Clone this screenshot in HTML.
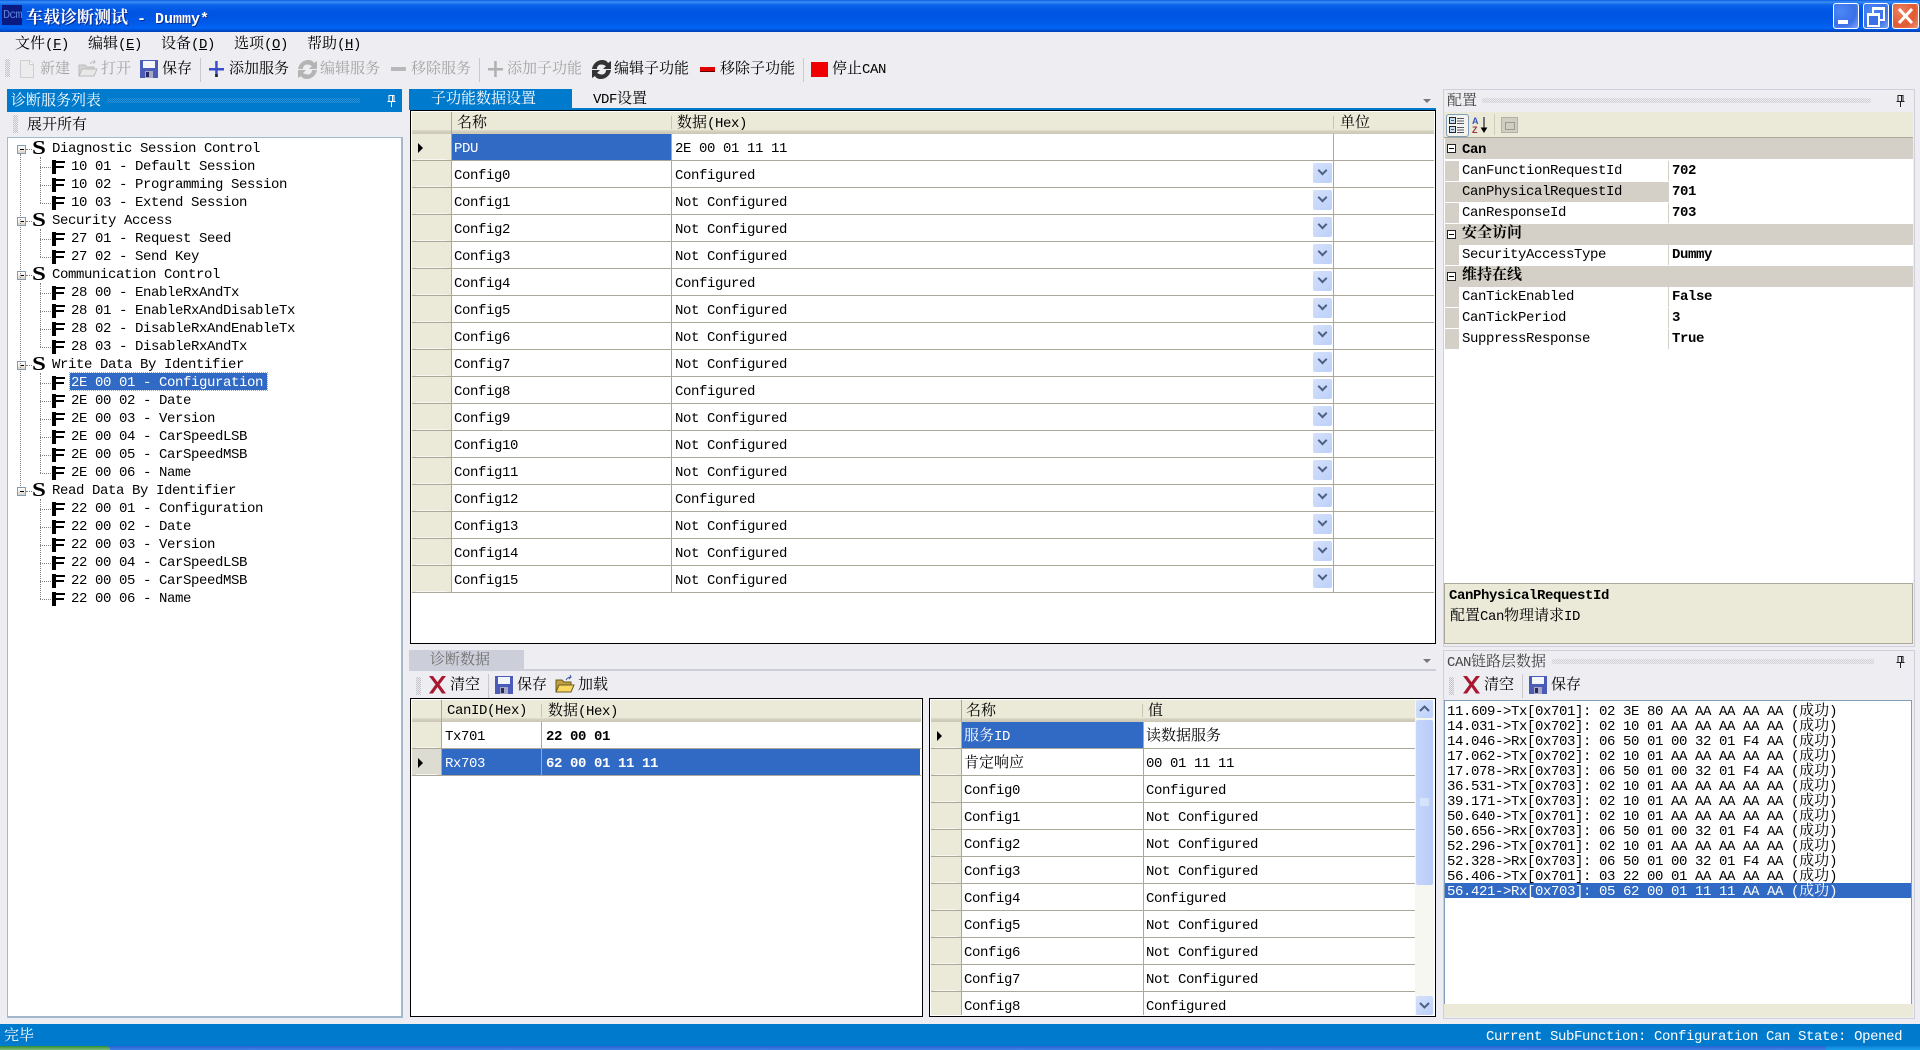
<!DOCTYPE html>
<html lang="zh"><head><meta charset="utf-8"><title>车载诊断测试</title>
<style>
html,body{margin:0;padding:0;width:1920px;height:1050px;overflow:hidden;background:#eeeef2}
body{position:relative;color:#000;font:14px/18px "Liberation Mono","Noto Serif CJK SC",monospace;letter-spacing:-.4px}
i{font:normal 15px/1 "Liberation Sans","Noto Serif CJK SC","WenQuanYi Zen Hei",serif;letter-spacing:0}
.x{position:absolute;white-space:pre;height:22px;line-height:22px}
.d{position:absolute}
.w{color:#fff}.gy{color:#a3a3a3}
svg{position:absolute;overflow:visible}
.grip{position:absolute;width:5px;background:conic-gradient(#c2c2c8 25%,transparent 0 50%,#c2c2c8 0 75%,transparent 0) 0 0/2px 2px}
.dots{position:absolute;height:5px;background:conic-gradient(#cfcfd5 25%,transparent 0 50%,#cfcfd5 0 75%,transparent 0) 0 0/2px 2px}
.sep{position:absolute;width:1px;background:#c9c9cf}
.tri{position:absolute;width:0;height:0;border-left:4px solid transparent;border-right:4px solid transparent;border-top:4px solid #77777c}
/* tree */
#tree .r{position:relative;height:18px;white-space:pre;line-height:18px}
#tree .s{padding-left:52px}
#tree .f{padding-left:71px}
#tree .f:before{content:"";position:absolute;left:52px;top:2px;width:13px;height:14px;background:linear-gradient(#000,#000) 0 0/4px 14px no-repeat,linear-gradient(#000,#000) 0 1px/13px 2px no-repeat,linear-gradient(#000,#000) 0 6px/12px 2px no-repeat}
#tree .f:after{content:"";position:absolute;left:40px;top:9px;width:11px;border-top:1px dotted #808080}
#tree .s b{position:absolute;left:32px;top:-2px;width:14px;font:bold 20px/20px "Liberation Serif",serif;letter-spacing:0;transform:scaleX(1.25);transform-origin:0 50%}
#tree .s:before{content:"";position:absolute;left:17px;top:5px;width:7px;height:7px;border:1px solid #7f9db9;background:linear-gradient(#000,#000) 2px 3px/4px 1px no-repeat,linear-gradient(#fff,#d8d4c8)}
#tree .s:after{content:"";position:absolute;left:26px;top:9px;width:6px;border-top:1px dotted #808080}
/* grids */
.hd{position:absolute;background:linear-gradient(#ebe9d8 0,#ebe9d8 80%,#d6d2c2 86%,#cbc7b6 100%)}
.grid .r{display:flex;height:26px;border-bottom:1px solid #aca899;position:relative;line-height:26px}
.grid a{display:block;flex:none;background:#ebe9d8;border-right:1px solid #aca899;box-sizing:border-box;position:relative;height:26px}
.grid a:after{content:"";position:absolute;left:4px;right:4px;bottom:0;border-bottom:1px solid #f8f7ef}
.grid p{margin:0;box-sizing:border-box;flex:none;height:26px;border-right:1px solid #aca899;padding:2px 0 0 2px;white-space:pre;background:#fff;overflow:hidden}
.sel{background:#316ac5!important;color:#fff}
.ar:before{content:"";position:absolute;left:6px;top:9px;border-left:5px solid #000;border-top:5px solid transparent;border-bottom:5px solid transparent}
.g1 a{width:40px}.g1 p:nth-of-type(1){width:220px}.g1 p:nth-of-type(2){width:662px;padding-left:3px}.g1 p:nth-of-type(3){width:100px;border-right:0}
.g2 a{width:30px}.g2 p:nth-of-type(1){width:100px;padding-left:3px}.g2 p:nth-of-type(2){width:378px;padding-left:4px;border-right:0;font-weight:bold}
.g3 a{width:31px}.g3 p:nth-of-type(1){width:182px}.g3 p:nth-of-type(2){width:271px;border-right:0}
.dd{position:absolute;left:901px;top:2px;width:19px;height:20px;background:linear-gradient(135deg,#d5e1fb,#bcd0fa);border-radius:2px}
.dd:after{content:"";position:absolute;left:6px;top:4px;width:5px;height:5px;border-right:2px solid #4d6185;border-bottom:2px solid #4d6185;transform:rotate(45deg)}
/* prop grid */
.cat{position:absolute;left:1445px;width:468px;height:21px;background:#d4d0c8;font-weight:bold;line-height:21px}
.cat:before{content:"";position:absolute;left:2px;top:6px;width:7px;height:7px;border:1px solid #222;background:linear-gradient(#000,#000) 1px 3px/5px 1px no-repeat,#fff}
.cat span{position:absolute;left:17px;white-space:pre}
.pr{position:absolute;left:1445px;width:468px;height:20px;background:#d4d0c8;line-height:20px;white-space:pre}
.pr p{position:absolute;margin:0;top:0;height:20px;background:#fff;overflow:hidden;padding-left:3px;box-sizing:border-box}
.pr p:nth-child(1){left:14px;width:209px}
.pr p:nth-child(2){left:224px;width:244px;font-weight:bold;padding-left:3px}
/* log */
#log div{height:15px;line-height:15px;white-space:pre;padding-left:2px}
</style></head><body>

<!-- title bar -->
<div class="d" style="left:0;top:0;width:1920px;height:32px;background:linear-gradient(#0a5de0 0,#3a8df5 2px,#0a63ea 5px,#0055e2 12px,#0058e6 22px,#0064f4 28px,#0048c8 31px,#0040b0 32px)"></div>
<div class="d" style="left:2px;top:5px;width:20px;height:20px;background:#0a1a80"></div>
<div class="x" style="left:3px;top:4px;font-size:12px;color:#5a7fd8;letter-spacing:-1px">Dcm</div>
<div class="x w" style="left:26px;top:9px;height:19px;font:bold 15px/19px 'Liberation Mono',monospace;letter-spacing:0;text-shadow:1px 1px 0 #0a2a90"><i style="font-size:17px;font-weight:bold">车载诊断测试</i> - Dummy*</div>
<!-- window buttons -->
<div class="d" style="left:1833px;top:3px;width:24px;height:24px;border:1px solid #fff;border-radius:3px;background:radial-gradient(circle at 30% 30%,#4b88f5,#3a6fe8 60%,#7fa8f5)"><div class="d" style="left:4px;top:16px;width:10px;height:4px;background:#fff"></div></div>
<div class="d" style="left:1863px;top:3px;width:24px;height:24px;border:1px solid #fff;border-radius:3px;background:radial-gradient(circle at 30% 30%,#4b88f5,#3a6fe8 60%,#7fa8f5)"><div class="d" style="left:8px;top:3px;width:9px;height:9px;border:2px solid #fff;border-top-width:3px"></div><div class="d" style="left:3px;top:9px;width:9px;height:9px;border:2px solid #fff;border-top-width:3px;background:#3a6fe8"></div></div>
<div class="d" style="left:1892px;top:3px;width:25px;height:24px;border:1px solid #fff;border-radius:3px;background:radial-gradient(circle at 30% 30%,#ee8060,#e05a32 60%,#ee9880)"><svg width="25" height="24" style="left:0;top:0"><path d="M6 5L19 19M19 5L6 19" stroke="#fff" stroke-width="3"/></svg></div>

<!-- menu -->
<div class="x" style="left:15px;top:34px"><i>文件</i>(<u>F</u>)</div>
<div class="x" style="left:88px;top:34px"><i>编辑</i>(<u>E</u>)</div>
<div class="x" style="left:161px;top:34px"><i>设备</i>(<u>D</u>)</div>
<div class="x" style="left:234px;top:34px"><i>选项</i>(<u>O</u>)</div>
<div class="x" style="left:307px;top:34px"><i>帮助</i>(<u>H</u>)</div>

<!-- toolbar -->
<div class="grip" style="left:5px;top:59px;height:18px"></div>
<svg style="left:19px;top:60px" width="16" height="18"><path d="M1.5 .5h9l4 4v13h-13z" fill="#ececec" stroke="#cfcfcf"/><path d="M10.5 .5v4h4" fill="#f8f8f8" stroke="#cfcfcf"/></svg>
<div class="x gy" style="left:40px;top:59px"><i>新建</i></div>
<svg style="left:78px;top:60px" width="20" height="18"><path d="M1 5h6l2 2h7v9H1z" fill="#d4d4d4" stroke="#bcbcbc"/><path d="M1 16l3-7h15l-3 7z" fill="#e8e8e8" stroke="#bcbcbc"/><path d="M12 4q2-3 5-2l-1-2M17 2l-2 2" fill="none" stroke="#c0c0c0"/></svg>
<div class="x gy" style="left:101px;top:59px"><i>打开</i></div>
<svg style="left:140px;top:60px" width="18" height="18"><rect width="18" height="18" fill="#4a5bb8"/><rect x="3" y="1" width="12" height="7" fill="#f4f4fb"/><rect x="5" y="11" width="8" height="7" fill="#a8a8c4"/><rect x="6" y="12" width="3" height="5" fill="#2a2a60"/></svg>
<div class="x" style="left:162px;top:59px"><i>保存</i></div>
<div class="sep" style="left:200px;top:58px;height:24px"></div>
<svg style="left:209px;top:61px" width="16" height="17"><rect y="7" width="15" height="2.5" fill="#3a4fc8"/><rect x="6.2" width="2.5" height="16" fill="#3a4fc8"/><rect x="6.2" y="13" width="2.5" height="3" fill="#222"/></svg>
<div class="x" style="left:229px;top:59px"><i>添加服务</i></div>
<svg style="left:298px;top:60px" width="19" height="19"><path d="M0 9C1 3 6 0 10 0c3 0 5 1 6 3l3-2v8h-8l3-3c-2-1-3-1.500-5-1.500C7 4.500 5 6 5 9z" fill="#b4b4b4"/><path d="M19 10c-1 6-6 9-10 9-3 0-5-1-6-3l-3 2v-8h8l-3 3c2 1 3 1.500 5 1.500 2 0 4-1.500 4-4.500z" fill="#b4b4b4"/></svg>
<div class="x gy" style="left:320px;top:59px"><i>编辑服务</i></div>
<div class="d" style="left:391px;top:67px;width:15px;height:4px;background:#b8b8b8"></div>
<div class="x gy" style="left:411px;top:59px"><i>移除服务</i></div>
<div class="sep" style="left:479px;top:58px;height:24px"></div>
<svg style="left:488px;top:61px" width="16" height="17"><rect y="7" width="15" height="2.5" fill="#b0b0b0"/><rect x="6.2" width="2.5" height="16" fill="#b0b0b0"/></svg>
<div class="x gy" style="left:507px;top:59px"><i>添加子功能</i></div>
<svg style="left:592px;top:60px" width="19" height="19"><path d="M0 9C1 3 6 0 10 0c3 0 5 1 6 3l3-2v8h-8l3-3c-2-1-3-1.500-5-1.500C7 4.500 5 6 5 9z" fill="#333"/><path d="M19 10c-1 6-6 9-10 9-3 0-5-1-6-3l-3 2v-8h8l-3 3c2 1 3 1.500 5 1.500 2 0 4-1.500 4-4.500z" fill="#333"/></svg>
<div class="x" style="left:614px;top:59px"><i>编辑子功能</i></div>
<div class="d" style="left:700px;top:67px;width:15px;height:4px;background:#e00000;box-shadow:0 1px 0 #600"></div>
<div class="x" style="left:720px;top:59px"><i>移除子功能</i></div>
<div class="sep" style="left:803px;top:58px;height:24px"></div>
<div class="d" style="left:811px;top:62px;width:17px;height:15px;background:#f00000"></div>
<div class="x" style="left:832px;top:59px"><i>停止</i>CAN</div>

<!-- left panel -->
<div class="d" style="left:7px;top:89px;width:395px;height:23px;background:#007acc"></div>
<div class="x w" style="left:11px;top:91px"><i>诊断服务列表</i></div>
<div class="dots" style="left:107px;top:98px;width:253px;background:conic-gradient(#2a8fd6 25%,transparent 0 50%,#2a8fd6 0 75%,transparent 0) 0 0/2px 2px"></div>
<svg style="left:387px;top:95px" width="9" height="12"><path d="M2 .5h5v6H2zM.5 6.5h8M4.5 6.5V12M5.5 1v5" fill="none" stroke="#fff"/></svg>
<div class="grip" style="left:13px;top:115px;height:18px"></div>
<div class="x" style="left:27px;top:115px"><i>展开所有</i></div>
<div class="d" id="tree" style="left:7px;top:137px;width:393px;height:878px;background:#fff;border:1px solid #a3b8cc;border-right-width:2px;border-bottom-width:2px;box-sizing:content-box">
<div class="d" style="left:-8px;top:2px;width:395px">
<div class="r s"><b>S</b>Diagnostic Session Control</div>
<div class="r f">10 01 - Default Session</div>
<div class="r f">10 02 - Programming Session</div>
<div class="r f">10 03 - Extend Session</div>
<div class="r s"><b>S</b>Security Access</div>
<div class="r f">27 01 - Request Seed</div>
<div class="r f">27 02 - Send Key</div>
<div class="r s"><b>S</b>Communication Control</div>
<div class="r f">28 00 - EnableRxAndTx</div>
<div class="r f">28 01 - EnableRxAndDisableTx</div>
<div class="r f">28 02 - DisableRxAndEnableTx</div>
<div class="r f">28 03 - DisableRxAndTx</div>
<div class="r s"><b>S</b>Write Data By Identifier</div>
<div class="r f"><span style="position:absolute;left:70px;top:-1px;width:196px;height:17px;line-height:20px;padding-left:1px;background:#316ac5;color:#fff;outline:1px dotted #c8a040;outline-offset:0">2E 00 01 - Configuration</span></div>
<div class="r f">2E 00 02 - Date</div>
<div class="r f">2E 00 03 - Version</div>
<div class="r f">2E 00 04 - CarSpeedLSB</div>
<div class="r f">2E 00 05 - CarSpeedMSB</div>
<div class="r f">2E 00 06 - Name</div>
<div class="r s"><b>S</b>Read Data By Identifier</div>
<div class="r f">22 00 01 - Configuration</div>
<div class="r f">22 00 02 - Date</div>
<div class="r f">22 00 03 - Version</div>
<div class="r f">22 00 04 - CarSpeedLSB</div>
<div class="r f">22 00 05 - CarSpeedMSB</div>
<div class="r f">22 00 06 - Name</div>
</div>
<!-- dotted verticals -->
<div class="d" style="left:12px;top:16px;height:334px;border-left:1px dotted #808080"></div>
<div class="d" style="left:32px;top:19px;height:46px;border-left:1px dotted #808080"></div>
<div class="d" style="left:32px;top:91px;height:28px;border-left:1px dotted #808080"></div>
<div class="d" style="left:32px;top:145px;height:64px;border-left:1px dotted #808080"></div>
<div class="d" style="left:32px;top:235px;height:100px;border-left:1px dotted #808080"></div>
<div class="d" style="left:32px;top:361px;height:100px;border-left:1px dotted #808080"></div>
</div>

<!-- center tab -->
<div class="d" style="left:409px;top:89px;width:163px;height:19px;background:#007acc"></div>
<div class="x w" style="left:431px;top:89px"><i>子功能数据设置</i></div>
<div class="x" style="left:593px;top:89px">VDF<i>设置</i></div>
<div class="d" style="left:409px;top:108px;width:1027px;height:2px;background:#007acc"></div>
<div class="tri" style="left:1423px;top:99px"></div>

<!-- main grid -->
<div class="d" style="left:410px;top:110px;width:1024px;height:532px;border:1px solid #000;background:#fff"></div>
<div class="hd" style="left:412px;top:112px;width:1022px;height:22px"></div>
<div class="d" style="left:451px;top:112px;width:1px;height:22px;background:#aca899"></div>
<div class="d" style="left:671px;top:116px;width:1px;height:13px;background:#c8c4b4"></div>
<div class="d" style="left:1333px;top:116px;width:1px;height:13px;background:#c8c4b4"></div>
<div class="x" style="left:457px;top:113px"><i>名称</i></div>
<div class="x" style="left:677px;top:113px"><i>数据</i>(Hex)</div>
<div class="x" style="left:1340px;top:113px"><i>单位</i></div>
<div class="d grid g1" style="left:412px;top:134px;width:1022px">
<div class="r"><a class="ar"></a><p class="sel">PDU</p><p>2E 00 01 11 11</p><p></p></div>
<div class="r"><a></a><p>Config0</p><p>Configured</p><p></p><b class="dd"></b></div>
<div class="r"><a></a><p>Config1</p><p>Not Configured</p><p></p><b class="dd"></b></div>
<div class="r"><a></a><p>Config2</p><p>Not Configured</p><p></p><b class="dd"></b></div>
<div class="r"><a></a><p>Config3</p><p>Not Configured</p><p></p><b class="dd"></b></div>
<div class="r"><a></a><p>Config4</p><p>Configured</p><p></p><b class="dd"></b></div>
<div class="r"><a></a><p>Config5</p><p>Not Configured</p><p></p><b class="dd"></b></div>
<div class="r"><a></a><p>Config6</p><p>Not Configured</p><p></p><b class="dd"></b></div>
<div class="r"><a></a><p>Config7</p><p>Not Configured</p><p></p><b class="dd"></b></div>
<div class="r"><a></a><p>Config8</p><p>Configured</p><p></p><b class="dd"></b></div>
<div class="r"><a></a><p>Config9</p><p>Not Configured</p><p></p><b class="dd"></b></div>
<div class="r"><a></a><p>Config10</p><p>Not Configured</p><p></p><b class="dd"></b></div>
<div class="r"><a></a><p>Config11</p><p>Not Configured</p><p></p><b class="dd"></b></div>
<div class="r"><a></a><p>Config12</p><p>Configured</p><p></p><b class="dd"></b></div>
<div class="r"><a></a><p>Config13</p><p>Not Configured</p><p></p><b class="dd"></b></div>
<div class="r"><a></a><p>Config14</p><p>Not Configured</p><p></p><b class="dd"></b></div>
<div class="r"><a></a><p>Config15</p><p>Not Configured</p><p></p><b class="dd"></b></div>
</div>

<!-- diagnostic data panel -->
<div class="d" style="left:409px;top:650px;width:115px;height:19px;background:#ccced9"></div>
<div class="x" style="left:430px;top:650px;color:#707070"><i>诊断数据</i></div>
<div class="d" style="left:409px;top:669px;width:1027px;height:2px;background:#ccced9"></div>
<div class="tri" style="left:1423px;top:659px"></div>
<div class="grip" style="left:416px;top:677px;height:18px"></div>
<svg style="left:428px;top:675px" width="19" height="19"><path d="M1 1h4l4.500 6 4.500-6h4l-6.500 8.500 6.500 9h-4l-4.500-6.500-4.500 6.500h-4l6.500-9z" fill="#a81830"/></svg>
<div class="x" style="left:450px;top:675px"><i>清空</i></div>
<div class="sep" style="left:488px;top:674px;height:24px"></div>
<svg style="left:495px;top:676px" width="18" height="18"><rect width="18" height="18" fill="#4a5bb8"/><rect x="3" y="1" width="12" height="7" fill="#f4f4fb"/><rect x="5" y="11" width="8" height="7" fill="#a8a8c4"/><rect x="6" y="12" width="3" height="5" fill="#2a2a60"/></svg>
<div class="x" style="left:517px;top:675px"><i>保存</i></div>
<svg style="left:555px;top:675px" width="20" height="19"><path d="M1 5h6l2 2h7v10H1z" fill="#c0a040" stroke="#6a5a20"/><path d="M1 17l3-7h15l-3 7z" fill="#f8d860" stroke="#6a5a20"/><path d="M11 5q2-3 5-3l-1-2M16 2l-2 2" fill="none" stroke="#4060a0"/></svg>
<div class="x" style="left:578px;top:675px"><i>加载</i></div>

<!-- left data table -->
<div class="d" style="left:410px;top:698px;width:511px;height:317px;border:1px solid #000;background:#fff"></div>
<div class="hd" style="left:412px;top:700px;width:509px;height:22px"></div>
<div class="d" style="left:441px;top:700px;width:1px;height:22px;background:#aca899"></div>
<div class="d" style="left:541px;top:704px;width:1px;height:13px;background:#c8c4b4"></div>
<div class="x" style="left:447px;top:700px">CanID(Hex)</div>
<div class="x" style="left:548px;top:701px"><i>数据</i>(Hex)</div>
<div class="d grid g2" style="left:412px;top:722px;width:509px">
<div class="r"><a></a><p>Tx701</p><p>22 00 01</p></div>
<div class="r"><a class="ar" style="background:#dddcd2"></a><p class="sel" style="border-color:#aca899">Rx703</p><p class="sel">62 00 01 11 11</p></div>
</div>

<!-- right data table -->
<div class="d" style="left:929px;top:698px;width:505px;height:317px;border:1px solid #000;background:#fff"></div>
<div class="hd" style="left:931px;top:700px;width:484px;height:22px"></div>
<div class="d" style="left:961px;top:700px;width:1px;height:22px;background:#aca899"></div>
<div class="d" style="left:1142px;top:704px;width:1px;height:13px;background:#c8c4b4"></div>
<div class="x" style="left:966px;top:701px"><i>名称</i></div>
<div class="x" style="left:1148px;top:701px"><i>值</i></div>
<div class="d grid g3" style="left:931px;top:722px;width:484px;height:293px;overflow:hidden">
<div class="r"><a class="ar"></a><p class="sel"><i>服务</i>ID</p><p><i>读数据服务</i></p></div>
<div class="r"><a></a><p><i>肯定响应</i></p><p>00 01 11 11</p></div>
<div class="r"><a></a><p>Config0</p><p>Configured</p></div>
<div class="r"><a></a><p>Config1</p><p>Not Configured</p></div>
<div class="r"><a></a><p>Config2</p><p>Not Configured</p></div>
<div class="r"><a></a><p>Config3</p><p>Not Configured</p></div>
<div class="r"><a></a><p>Config4</p><p>Configured</p></div>
<div class="r"><a></a><p>Config5</p><p>Not Configured</p></div>
<div class="r"><a></a><p>Config6</p><p>Not Configured</p></div>
<div class="r"><a></a><p>Config7</p><p>Not Configured</p></div>
<div class="r"><a></a><p>Config8</p><p>Configured</p></div>
</div>
<!-- scrollbar -->
<div class="d" style="left:1415px;top:700px;width:19px;height:315px;background:#f7f7f1"></div>
<div class="d" style="left:1416px;top:700px;width:17px;height:18px;background:linear-gradient(135deg,#d5e1fb,#bcd0fa);border-radius:2px"><svg width="17" height="18" style="left:0;top:0"><path d="M4 11l4.500-4.500L13 11" fill="none" stroke="#4d6185" stroke-width="2"/></svg></div>
<div class="d" style="left:1416px;top:720px;width:17px;height:165px;background:linear-gradient(90deg,#c6d6fb,#b8ccf8);border:0;border-radius:2px"><svg width="17" height="10" style="left:0;top:78px"><path d="M4 1h9M4 3h9M4 5h9M4 7h9" stroke="#eef3fe"/></svg></div>
<div class="d" style="left:1416px;top:996px;width:17px;height:19px;background:linear-gradient(135deg,#d5e1fb,#bcd0fa);border-radius:2px"><svg width="17" height="19" style="left:0;top:0"><path d="M4 7l4.500 4.500L13 7" fill="none" stroke="#4d6185" stroke-width="2"/></svg></div>

<!-- config panel -->
<div class="d" style="left:1443px;top:89px;width:470px;height:556px;border:1px solid #d0d0dc;box-sizing:content-box"></div>
<div class="x" style="left:1447px;top:91px;color:#444"><i>配置</i></div>
<div class="dots" style="left:1482px;top:98px;width:389px"></div>
<svg style="left:1896px;top:95px" width="9" height="12"><path d="M2 .5h5v6H2zM.5 6.5h8M4.500 6.5V12M5.500 1v5" fill="none" stroke="#222"/></svg>
<div class="d" style="left:1444px;top:112px;width:469px;height:25px;background:#ebe9d8"></div>
<div class="d" style="left:1446px;top:114px;width:21px;height:21px;border:1px solid #7f9db9;border-radius:3px;background:#f4f4ee"></div>
<svg style="left:1449px;top:117px" width="17" height="17"><rect x=".5" y=".5" width="6" height="6" fill="#cde" stroke="#223"/><rect x=".5" y="9.500" width="6" height="6" fill="#cde" stroke="#223"/><path d="M2 3.500h3M2 12.500h3M8 1.500h7M8 4h7M8 6.500h7M8 10.500h7M8 13h7M8 15.500h7" stroke="#556"/></svg>
<svg style="left:1472px;top:116px" width="16" height="18"><text x="0" y="8" font-family="Liberation Sans" font-size="9" font-weight="bold" fill="#3050c0" letter-spacing="0">A</text><text x="0" y="17" font-family="Liberation Sans" font-size="9" font-weight="bold" fill="#a03040" letter-spacing="0">Z</text><path d="M12 1v14M9.500 12l2.500 4 2.500-4z" stroke="#000" fill="#000"/></svg>
<div class="sep" style="left:1494px;top:114px;height:21px;background:#cfccbc"></div>
<div class="d" style="left:1501px;top:117px;width:15px;height:14px;background:#d0cec2;border:1px solid #b4b2a6"><div class="d" style="left:3px;top:4px;width:8px;height:6px;border:1px solid #9c9a90"></div></div>
<div class="d" style="left:1444px;top:137px;width:469px;height:446px;background:#fff;border-top:1px solid #aca899"></div>

<div class="cat" style="top:138px"><span style="top:2px">Can</span></div>
<div class="pr" style="top:161px"><p>CanFunctionRequestId</p><p>702</p></div>
<div class="pr" style="top:182px"><p style="background:#d4d0c8">CanPhysicalRequestId</p><p>701</p></div>
<div class="pr" style="top:203px"><p>CanResponseId</p><p>703</p></div>
<div class="cat" style="top:224px"><span><i style="font-weight:bold">安全访问</i></span></div>
<div class="pr" style="top:245px"><p>SecurityAccessType</p><p>Dummy</p></div>
<div class="cat" style="top:266px"><span><i style="font-weight:bold">维持在线</i></span></div>
<div class="pr" style="top:287px"><p>CanTickEnabled</p><p>False</p></div>
<div class="pr" style="top:308px"><p>CanTickPeriod</p><p>3</p></div>
<div class="pr" style="top:329px"><p>SuppressResponse</p><p>True</p></div>

<div class="d" style="left:1444px;top:583px;width:467px;height:59px;background:#ebe9d8;border:1px solid #aca899"></div>
<div class="x" style="left:1449px;top:585px;font-weight:bold">CanPhysicalRequestId</div>
<div class="x" style="left:1450px;top:606px"><i>配置</i>Can<i>物理请求</i>ID</div>

<!-- CAN panel -->
<div class="d" style="left:1443px;top:650px;width:470px;height:367px;border:1px solid #d0d0dc;box-sizing:content-box"></div>
<div class="x" style="left:1447px;top:652px;color:#444">CAN<i>链路层数据</i></div>
<div class="dots" style="left:1552px;top:659px;width:322px"></div>
<svg style="left:1896px;top:656px" width="9" height="12"><path d="M2 .5h5v6H2zM.5 6.5h8M4.500 6.5V12M5.500 1v5" fill="none" stroke="#222"/></svg>
<div class="grip" style="left:1449px;top:677px;height:18px"></div>
<svg style="left:1462px;top:675px" width="19" height="19"><path d="M1 1h4l4.500 6 4.500-6h4l-6.500 8.500 6.500 9h-4l-4.500-6.500-4.500 6.500h-4l6.500-9z" fill="#a81830"/></svg>
<div class="x" style="left:1484px;top:675px"><i>清空</i></div>
<div class="sep" style="left:1522px;top:674px;height:24px"></div>
<svg style="left:1529px;top:676px" width="18" height="18"><rect width="18" height="18" fill="#4a5bb8"/><rect x="3" y="1" width="12" height="7" fill="#f4f4fb"/><rect x="5" y="11" width="8" height="7" fill="#a8a8c4"/><rect x="6" y="12" width="3" height="5" fill="#2a2a60"/></svg>
<div class="x" style="left:1551px;top:675px"><i>保存</i></div>
<div class="d" id="log" style="left:1444px;top:700px;width:466px;height:302px;background:#fff;border:1px solid #7f9db9;padding-top:2px;box-sizing:content-box">
<div>11.609-&gt;Tx[0x701]: 02 3E 80 AA AA AA AA AA (<i>成功</i>)</div>
<div>14.031-&gt;Tx[0x702]: 02 10 01 AA AA AA AA AA (<i>成功</i>)</div>
<div>14.046-&gt;Rx[0x703]: 06 50 01 00 32 01 F4 AA (<i>成功</i>)</div>
<div>17.062-&gt;Tx[0x702]: 02 10 01 AA AA AA AA AA (<i>成功</i>)</div>
<div>17.078-&gt;Rx[0x703]: 06 50 01 00 32 01 F4 AA (<i>成功</i>)</div>
<div>36.531-&gt;Tx[0x703]: 02 10 01 AA AA AA AA AA (<i>成功</i>)</div>
<div>39.171-&gt;Tx[0x703]: 02 10 01 AA AA AA AA AA (<i>成功</i>)</div>
<div>50.640-&gt;Tx[0x701]: 02 10 01 AA AA AA AA AA (<i>成功</i>)</div>
<div>50.656-&gt;Rx[0x703]: 06 50 01 00 32 01 F4 AA (<i>成功</i>)</div>
<div>52.296-&gt;Tx[0x701]: 02 10 01 AA AA AA AA AA (<i>成功</i>)</div>
<div>52.328-&gt;Rx[0x703]: 06 50 01 00 32 01 F4 AA (<i>成功</i>)</div>
<div>56.406-&gt;Tx[0x701]: 03 22 00 01 AA AA AA AA (<i>成功</i>)</div>
<div style="background:#316ac5;color:#fff">56.421-&gt;Rx[0x703]: 05 62 00 01 11 11 AA AA (<i>成功</i>)</div>
</div>
<div class="d" style="left:1444px;top:1004px;width:469px;height:13px;background:#ebe9d8"></div>

<!-- status bar -->
<div class="d" style="left:0;top:1024px;width:1920px;height:23px;background:#007acc"></div>
<div class="x w" style="left:4px;top:1026px"><i>完毕</i></div>
<div class="x w" style="left:1486px;top:1026px">Current SubFunction: Configuration Can State: Opened</div>
<!-- taskbar sliver -->
<div class="d" style="left:0;top:1046px;width:1920px;height:4px;background:linear-gradient(#2a62d0,#3f80e8)"></div>
<div class="d" style="left:0;top:1046px;width:110px;height:4px;background:linear-gradient(#2f8a2f,#7fc07f);border-radius:0 4px 0 0"></div>
<div class="d" style="left:1826px;top:1046px;width:94px;height:4px;background:linear-gradient(#1080d8,#18a0ec)"></div>
</body></html>
